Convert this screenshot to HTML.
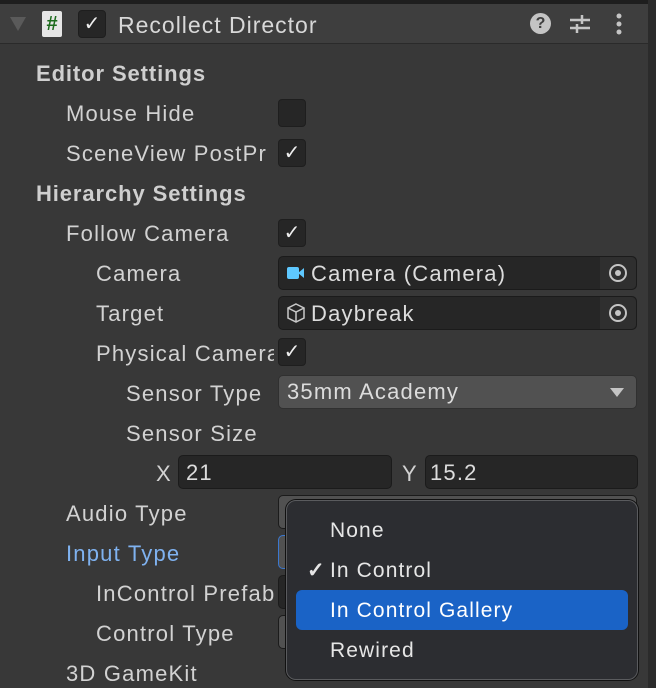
<!DOCTYPE html>
<html><head><style>
*{margin:0;padding:0;box-sizing:border-box}
body{width:656px;height:688px;background:#383838;font-family:"Liberation Sans",sans-serif;color:#d2d2d2;position:relative;overflow:hidden;letter-spacing:1.2px}
.a{position:absolute}
.lbl{position:absolute;font-size:22px;line-height:24px;white-space:nowrap;overflow:hidden}
.h{font-weight:bold;color:#cfcfcf;letter-spacing:0.9px}
.cb{position:absolute;width:28px;height:28px;background:#262626;border:1px solid #1e1e1e;border-radius:4px;color:#eee;font-size:20px;line-height:26px;text-align:center;letter-spacing:0}
.fld{position:absolute;background:#262626;border:1px solid #1b1b1b;border-radius:5px;font-size:22px;line-height:30px;color:#dcdcdc}
.p{font-size:21px;color:#e6e6e6;letter-spacing:1.1px}
</style></head><body>
<div class="a" style="left:0;top:0;width:656px;height:4px;background:#1e1e1e"></div>
<div class="a" style="left:0;top:4px;width:648px;height:40px;background:#3e3e3e;border-bottom:1px solid #2a2a2a"></div>
<div class="a" style="left:648px;top:0;width:8px;height:688px;background:#2b2b2b"></div>
<svg class="a" style="left:9px;top:16px" width="18" height="16"><path d="M1 1H17L9 15Z" fill="#5a5a5a"/></svg>
<div class="a" style="left:42px;top:11px;width:20px;height:26px;background:#e6e6e6;border-radius:2px;color:#1c6b1c;font-weight:bold;font-size:20px;text-align:center;line-height:26px;letter-spacing:0">#</div>
<div class="cb" style="left:78px;top:10px;width:28px;height:28px">✓</div>
<div class="lbl" style="left:118px;top:13px;font-size:23px;color:#d8d8d8;letter-spacing:1px">Recollect Director</div>
<div class="a" style="left:530px;top:13px;width:21px;height:21px;border-radius:50%;background:#c4c4c4;color:#3e3e3e;font-weight:bold;font-size:16px;text-align:center;line-height:21px;letter-spacing:0">?</div>
<svg class="a" style="left:568px;top:12px" width="24" height="24" stroke="#c4c4c4" stroke-width="2.5"><path d="M2 8H22M2 16H22M14 3V12M9 12V21"/></svg>
<svg class="a" style="left:614px;top:12px" width="10" height="24" fill="#c4c4c4"><circle cx="5" cy="4" r="2.5"/><circle cx="5" cy="12" r="2.5"/><circle cx="5" cy="20" r="2.5"/></svg>

<div class="lbl h" style="left:36px;top:62px">Editor Settings</div>
<div class="lbl" style="left:66px;top:102px">Mouse Hide</div>
<div class="cb" style="left:278px;top:99px"></div>
<div class="lbl" style="left:66px;top:142px;width:212px">SceneView PostPr</div>
<div class="cb" style="left:278px;top:139px">✓</div>
<div class="lbl h" style="left:36px;top:182px">Hierarchy Settings</div>
<div class="lbl" style="left:66px;top:222px">Follow Camera</div>
<div class="cb" style="left:278px;top:219px">✓</div>
<div class="lbl" style="left:96px;top:262px">Camera</div>
<div class="fld" style="left:278px;top:256px;width:359px;height:34px"><span style="position:absolute;left:8px;top:10px;width:12px;height:12px;background:#5ec8ff;border-radius:2px"></span><span style="position:absolute;left:19px;top:11px;border:5px solid transparent;border-right:6px solid #5ec8ff;border-left:0"></span><span style="position:absolute;left:32px;top:2px">Camera (Camera)</span><span style="position:absolute;right:0;top:0;width:36px;height:32px;background:#2f2f2f;border-radius:0 5px 5px 0"></span><span style="position:absolute;right:9px;top:7px;width:18px;height:18px;border:2px solid #c4c4c4;border-radius:50%"></span><span style="position:absolute;right:15px;top:13px;width:6px;height:6px;background:#c4c4c4;border-radius:50%"></span></div>
<div class="lbl" style="left:96px;top:302px">Target</div>
<div class="fld" style="left:278px;top:296px;width:359px;height:34px"><svg style="position:absolute;left:7px;top:6px" width="20" height="20" fill="none" stroke="#c8c8c8" stroke-width="1.5"><path d="M10 1L18 5V15L10 19L2 15V5ZM2 5L10 9L18 5M10 9V19"/></svg><span style="position:absolute;left:32px;top:2px">Daybreak</span><span style="position:absolute;right:0;top:0;width:36px;height:32px;background:#2f2f2f;border-radius:0 5px 5px 0"></span><span style="position:absolute;right:9px;top:7px;width:18px;height:18px;border:2px solid #c4c4c4;border-radius:50%"></span><span style="position:absolute;right:15px;top:13px;width:6px;height:6px;background:#c4c4c4;border-radius:50%"></span></div>
<div class="lbl" style="left:96px;top:342px;width:178px">Physical Camera</div>
<div class="cb" style="left:278px;top:338px">✓</div>
<div class="lbl" style="left:126px;top:382px">Sensor Type</div>
<div class="fld" style="left:278px;top:375px;width:359px;height:34px;background:#515151;border-color:#303030"><span style="position:absolute;left:8px;top:1px">35mm Academy</span><svg style="position:absolute;right:12px;top:12px" width="14" height="10"><path d="M0 0H14L7 9Z" fill="#c4c4c4"/></svg></div>
<div class="lbl" style="left:126px;top:422px">Sensor Size</div>
<div class="lbl" style="left:156px;top:462px">X</div>
<div class="fld" style="left:178px;top:455px;width:214px;height:34px"><span style="position:absolute;left:7px;top:2px">21</span></div>
<div class="lbl" style="left:402px;top:462px">Y</div>
<div class="fld" style="left:425px;top:455px;width:213px;height:34px"><span style="position:absolute;left:4px;top:2px">15.2</span></div>
<div class="lbl" style="left:66px;top:502px">Audio Type</div>
<div class="fld" style="left:278px;top:495px;width:359px;height:34px;background:#515151"></div>
<div class="lbl" style="left:66px;top:542px;color:#7fb2f0">Input Type</div>
<div class="fld" style="left:278px;top:535px;width:359px;height:34px;background:#515151;border-color:#3b78d0"></div>
<div class="lbl" style="left:96px;top:582px">InControl Prefab</div>
<div class="fld" style="left:278px;top:575px;width:359px;height:34px"></div>
<div class="lbl" style="left:96px;top:622px">Control Type</div>
<div class="fld" style="left:278px;top:615px;width:359px;height:34px;background:#515151"></div>
<div class="lbl" style="left:66px;top:662px">3D GameKit</div>

<div class="a" style="left:286px;top:500px;width:352px;height:180px;background:#2c2d31;border:1px solid #5a5b5e;border-radius:10px;box-shadow:0 0 0 1px #111"></div>
<div class="a" style="left:296px;top:590px;width:332px;height:40px;background:#1a63c6;border-radius:6px"></div>
<div class="lbl p" style="left:330px;top:519px">None</div>
<div class="lbl p" style="left:307px;top:559px;font-weight:bold">✓</div>
<div class="lbl p" style="left:330px;top:559px">In Control</div>
<div class="lbl p" style="left:330px;top:599px;color:#fff">In Control Gallery</div>
<div class="lbl p" style="left:330px;top:639px">Rewired</div>
</body></html>
